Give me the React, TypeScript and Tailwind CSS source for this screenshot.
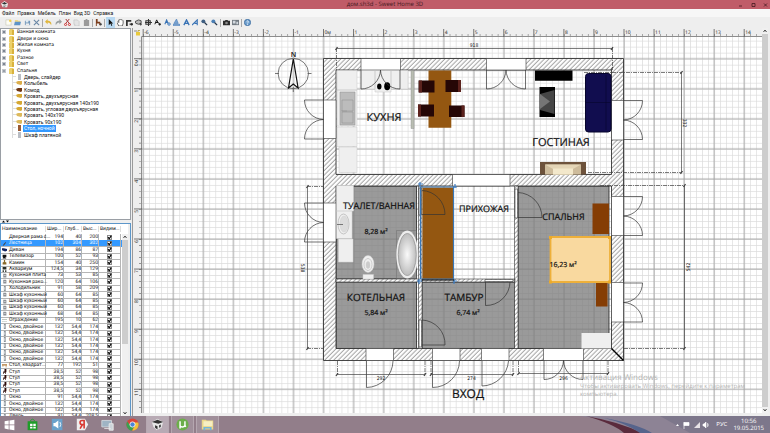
import { useState, type ReactNode } from 'react';
import { clsx } from 'clsx';

const MENUS = ['Файл', 'Правка', 'Мебель', 'План', 'Вид 3D', 'Справка'];
const FOLDERS = ['Ванная комната', 'Двери и окна', 'Жилая комната', 'Кухня', 'Разное', 'Свет'];
const BEDROOM = [
  { name: 'Дверь, слайдер', color: '#b9bdc4', slim: true },
  { name: 'Колыбель', color: '#dcae4c' },
  { name: 'Комод', color: '#6d3413' },
  { name: 'Кровать, двухъярусная', color: '#d6a834' },
  { name: 'Кровать, двухъярусная 140x190', color: '#d6a834' },
  { name: 'Кровать, угловая двухъярусная', color: '#d6a834' },
  { name: 'Кровать 140x190', color: '#dcb95c' },
  { name: 'Кровать 90x190', color: '#dcb95c' },
  { name: 'Стол, ночной', color: '#9a5a33', slim: true },
  { name: 'Шкаф платяной', color: '#b9bdc4', slim: true },
];

type Row = { name: string; w: string; d: string; h: string; icon: string };
const row = (name: string, w: string, d: string, h: string, icon: string): Row => ({ name, w, d, h, icon });

const WINDOW2 = row('Окно, двойное', '132', '54,4', '174', 'window');
const CHAIR = row('Стул', '38,5', '52', '98', 'chair');
const ROWS: Row[] = [
  row('Дверная рама с...', '194', '40', '200', 'none'),
  row('Лестница', '102', '304', '302', 'stairs'),
  row('Диван', '194', '86', '87', 'sofa'),
  row('Телевизор', '100', '52', '93', 'tv'),
  row('Камин', '154', '40', '250', 'fire'),
  row('Аквариум', '124,5', '34', '129', 'tank'),
  row('Кухонная плита', '73', '53', '85', 'box'),
  row('Кухонная рако...', '120', '64', '106', 'box'),
  row('Холодильник', '91', '58', '209', 'window'),
  row('Шкаф кухонный', '60', '64', '85', 'box'),
  row('Шкаф кухонный', '60', '64', '85', 'box'),
  row('Шкаф кухонный', '60', '64', '85', 'box'),
  row('Шкаф кухонный', '68', '64', '85', 'box'),
  row('Ограждение', '195', '10', '62', 'fence'),
  WINDOW2, WINDOW2, WINDOW2, WINDOW2, WINDOW2, WINDOW2,
  row('Стол, квадрат...', '77', '192', '51', 'table'),
  CHAIR, CHAIR, CHAIR, CHAIR,
  row('Окно', '91', '54,4', '174', 'window'),
  WINDOW2, WINDOW2,
  row('Дверь', '91', '54,4', '208,5', 'window'),
];

const ROW_ICONS: Record<string, ReactNode> = {
  none: null,
  stairs: <path d="M1 7 6 1v2L3 7z" fill="#4a3a2c" />,
  sofa: <path d="M0 2h3l5 1v3L5 7 0 5z" fill="#13235e" />,
  tv: <path d="M1 1h6v4H5l2 2H1l1-2H1z" fill="#111" />,
  fire: <path d="M3 0h2v3l2 1v3H1V4l2-1z" fill="#8a6a2c" />,
  tank: <path d="M1 0h6v4H1zM1 5h2v3H1zM5 5h2v3H5z" fill="#2b302b" />,
  box: <path d="M2 1h4l1 1v5H2zM3 3h3v1H3z" fill="#8d9095" fillRule="evenodd" />,
  fence: <path d="M0 2h8v1H0zM0 5h8v1H0z" fill="#aeb8ae" />,
  window: <path d="M3 0h3v8H3zM4 2v4h1V2z" fill="#8b9298" fillRule="evenodd" />,
  table: <path d="M0 2h8v2H7v3H6V4H2v2H1V4H0z" fill="#b07a3a" />,
  chair: <path d="M4 0h3v5H6v3H5V6H3v2H2V4h2z" fill="#2c0b08" />,
};

const FILE_TOOLS: [string, ReactNode][] = [
  ['Создать', <><path d="M1 1h4l2 2v4H1z" fill="#fdfdf4" stroke="#b6b6a0" strokeWidth=".5" /><circle cx="6" cy="2" r="1.4" fill="#f3cf4a" /></>],
  ['Открыть', <><path d="M1 1h3l1 1h2v2H1z" fill="#eed88a" /><path d="M0 7 1 3h7L7 7z" fill="#5d93c8" /></>],
  ['Сохранить', <><path d="M1 2h6v5H1z" fill="#7397ba" /><path d="M2 0h3v4H2z" fill="#dfeaf3" /><path d="M2 5h4v2H2z" fill="#eee" /></>],
  ['Параметры', <path d="m1 1 6 6M7 1 1 7" stroke="#6a87a5" strokeWidth="1.3" />],
];
const EDIT_TOOLS: [string, ReactNode][] = [
  ['Отменить', <path d="M0 3 3 0v2c3 0 5 2 4 5-1-2-2-3-4-3v2z" fill="#e0b63c" />],
  ['Вернуть', <path d="M8 3 5 0v2C2 2 0 4 1 7c1-2 2-3 4-3v2z" fill="#9aa0a0" />],
  ['Вырезать', <><path d="m2 0 4 5M6 0 2 5" stroke="#a33" strokeWidth="1.1" /><circle cx="1.8" cy="6.3" r="1.2" fill="none" stroke="#c22" /><circle cx="6.2" cy="6.3" r="1.2" fill="none" stroke="#c22" /></>],
  ['Копировать', <path d="M1 1h4l2 2v5H2V6H1z" fill="#e4e4e4" stroke="#b0b0b0" strokeWidth=".5" />],
  ['Вставить', <path d="M1 1h2V0h2v1h2v7H1z" fill="#9b9b9b" />],
];
const ADD_TOOLS: [string, ReactNode][] = [
  ['Добавить мебель', <><path d="M1 0h2v3h3v4H5V5H2v3H1z" fill="#7b3d1c" /><path d="M5 6h3M6.500 4.500v3" stroke="#333" /></>],
];
const PLAN_TOOLS: [string, ReactNode][] = [
  ['Выбрать', <path d="M2 0v7l2-2 1 3 1-.5L5 5h2z" fill="#111" />],
  ['Панорама', <path d="M2 8 0 4l1-1 1 1V1h1l1-1 1 1h1l1 1v3L6 8z" fill="#fff" stroke="#333" strokeWidth=".8" />],
  ['Создать стены', <><path d="M0 1h6v2H2v5H0z" fill="#333" /><path d="M4 5h4v2H4z" fill="#666" /><path d="M5 6h3M6.500 4.500v3" stroke="#222" /></>],
  ['Создать комнаты', <path d="M0 3 4 1l3 1v3L4 6 1 5zM5 6h3M6.500 4.500v3" fill="#bbb" stroke="#333" strokeWidth=".9" />],
  ['Создать полилинии', <path d="M1 2h5v4H1zM4 0v8M0 4h8" fill="none" stroke="#333" strokeWidth="1.200" />],
  ['Создать размеры', <path d="M1 6 3 1l2 4M2 4h3M5 6h3M6.500 4.500v3" fill="none" stroke="#111" strokeWidth="1.100" />],
  ['Добавить текст', <><path d="M1 6 3 1l2 5M2 4h3" fill="none" stroke="#3973b5" strokeWidth="1.200" /><circle cx="5.800" cy="5.800" r="1.500" fill="#9bbde0" stroke="#3973b5" strokeWidth=".7" /></>],
  ['Увеличить текст', <><path d="M1 5 4 0l2 5zM0 6h8v1.500H0z" fill="#7ba5d4" stroke="#3d75b5" strokeWidth=".6" /></>],
  ['Полужирный', <path d="M1 7 4 1l3 6M2 5h4" fill="none" stroke="#3973b5" strokeWidth="1.500" />],
  ['Курсив', <path d="M0 7 6 1v6M3 5h3" fill="none" stroke="#3973b5" strokeWidth="1.300" />],
  ['Увеличить', <><circle cx="2.700" cy="2.700" r="2.200" fill="#3e5f83" /><path d="m4 4 3 3" stroke="#26384d" strokeWidth="1.500" /></>],
  ['Уменьшить', <><circle cx="2.700" cy="2.700" r="2.200" fill="#4b7fb5" /><path d="m4 4 3 3" stroke="#26384d" strokeWidth="1.500" /></>],
];
const VIEW_TOOLS: [string, ReactNode][] = [
  ['Создать фото', <><path d="M0 2h2l1-1h2l1 1h2v5H0z" fill="#2c2c2c" /><circle cx="4" cy="4.500" r="1.500" fill="#8b8b8b" /></>],
  ['Создать видео', <><path d="M0 1h8v6H0z" fill="#737b83" /><path d="M1 2h3v3H1zM5 3h2v3H5z" fill="#d3d9df" /></>],
];
const HELP_TOOLS: [string, ReactNode][] = [
  ['Справка', <><circle cx="4" cy="4" r="3.600" fill="#6fa0cf" stroke="#2f6296" strokeWidth=".8" /><path d="M3 3q1-1.500 2 0 0 1-1 1.500M4 5.500v1" fill="none" stroke="#fff" /></>],
];

function ToolGroup({ tools, className }: { tools: [string, ReactNode][]; className: string }) {
  return (
    <div className={clsx('flex h-full shrink-0', className)}>
      {tools.map(([label, icon]) => (
        <button
          key={label}
          aria-label={label}
          className={clsx('flex flex-1 items-center justify-center', label === 'Выбрать' && 'bg-[#b8d9f2]')}
        >
          <svg viewBox="0 0 8 8" className="size-[7px] shrink-0">{icon}</svg>
        </button>
      ))}
    </div>
  );
}

function Separator() {
  return <div className="mx-px h-[8px] w-px shrink-0 bg-[#a9a9a9]" />;
}

function Toolbar() {
  return (
    <div className="flex h-[11px] shrink-0 items-center bg-[#eeeeee] pl-[4px]">
      <ToolGroup tools={FILE_TOOLS} className="w-[37px]" />
      <Separator />
      <ToolGroup tools={EDIT_TOOLS} className="w-[47px]" />
      <Separator />
      <ToolGroup tools={ADD_TOOLS} className="w-[9px]" />
      <Separator />
      <ToolGroup tools={PLAN_TOOLS} className="w-[113px]" />
      <Separator />
      <ToolGroup tools={VIEW_TOOLS} className="w-[18px]" />
      <Separator />
      <ToolGroup tools={HELP_TOOLS} className="w-[9px]" />
    </div>
  );
}

function Expander({ open }: { open?: boolean }) {
  return (
    <svg viewBox="0 0 4 4" className="mr-[3px] size-[4px] shrink-0">
      <path d="M0 0h4v4H0z" fill="#c3c7cc" />
      <path d={open ? 'M1 2h2' : 'M1 2h2M2 1v2'} stroke="#4b5867" strokeWidth=".7" />
    </svg>
  );
}

function FolderIcon() {
  return (
    <svg viewBox="0 0 6 6" className="mr-[2px] size-[6px] shrink-0">
      <path d="M1 0h3l1 1v5H0V1z" fill="#ecd06a" />
      <path d="M3 1h2v5H3z" fill="#d9b23e" />
    </svg>
  );
}

function Catalog({ selected, onSelect }: { selected: string; onSelect: (name: string) => void }) {
  return (
    <div className="h-[192px] shrink-0 overflow-hidden border border-[#9a9fa5] bg-white">
      <ul className="flex h-[109px] flex-col whitespace-nowrap">
        {FOLDERS.map(name => (
          <li key={name} className="flex flex-1 items-center pl-px">
            <Expander /><FolderIcon />{name}
          </li>
        ))}
        <li className="flex flex-1 items-center pl-px"><Expander open /><FolderIcon />Спальня</li>
        {BEDROOM.map(item => (
          <li key={item.name} className="flex flex-1 items-center pl-[11px]">
            <span className="h-full w-[4px] shrink-0 border-l border-[#dddddd]">
              <span className="block h-1/2 border-b border-[#dddddd]" />
            </span>
            <svg viewBox="0 0 6 6" className="mr-px size-[6px] shrink-0">
              <path d={item.slim ? 'M2 0h3v6H2z' : 'M0 2 2 1h4v3L5 5 1 4z'} fill={item.color} />
            </svg>
            <button
              onClick={() => onSelect(item.name)}
              className={clsx('h-full px-px', selected === item.name && 'bg-[#3399ff] text-white')}
            >
              {item.name}
            </button>
          </li>
        ))}
      </ul>
    </div>
  );
}

const COLUMNS = 'grid grid-cols-[45px_18px_18px_17px_22px]';

function FurnitureTable() {
  const [selected, setSelected] = useState(1);
  return (
    <div className="flex min-h-0 flex-1 overflow-hidden border border-b-0 border-[#5c96c9] bg-white">
      <table className="block min-w-0 flex-1 overflow-hidden whitespace-nowrap">
        <thead className="block">
          <tr className={clsx(COLUMNS, 'h-[10px] items-center')}>
            {['Наименование', 'Шир...', 'Глуб...', 'Выс...', 'Видим...'].map(title => (
              <th key={title} className="border-r border-[#dddddd] pl-px text-left font-normal">{title}</th>
            ))}
          </tr>
        </thead>
        <tbody className="flex h-[186px] flex-col">
          {ROWS.map((r, i) => (
            <tr
              key={i}
              onClick={() => setSelected(i)}
              className={clsx(COLUMNS, 'min-h-0 flex-1 items-stretch', i === selected && 'bg-[#3399ff] text-white')}
            >
              <td className="flex items-center border-r border-b border-[#b5b5b5] pl-px">
                <svg viewBox="0 0 8 8" className="mr-[2px] size-[5px] shrink-0">{ROW_ICONS[r.icon]}</svg>
                {r.name}
              </td>
              {[r.w, r.d, r.h].map((value, n) => (
                <td key={n} className="flex items-center justify-end border-r border-b border-[#b5b5b5]">{value}</td>
              ))}
              <td className="flex items-center justify-center border-r border-b border-[#b5b5b5]">
                <input
                  type="checkbox"
                  defaultChecked
                  aria-label={`Видимость: ${r.name}`}
                  className="peer size-[5px] appearance-none border border-[#8c8c8c] bg-white"
                />
                <svg viewBox="0 0 5 5" className="pointer-events-none -ml-[5px] hidden size-[5px] peer-checked:block">
                  <path d="m1 2.200 1.200 1.600L4.300.6" fill="none" stroke="#000" strokeWidth="1.100" />
                </svg>
              </td>
            </tr>
          ))}
        </tbody>
      </table>
      <div className="mt-[10px] flex w-[6px] shrink-0 flex-col items-center bg-[#f0f0f0]">
        <Arrow />
        <div className="h-[104px] w-full bg-[#cdcdcd]" />
        <div className="flex-1" />
        <Arrow down />
      </div>
      <div className="w-[2px] shrink-0 bg-[#eeeeee]" />
    </div>
  );
}

function Arrow({ down }: { down?: boolean }) {
  return (
    <svg viewBox="0 0 6 6" className="size-[6px] shrink-0">
      <path d={down ? 'm1.500 2 1.500 2 1.500-2' : 'm1.500 4 1.500-2 1.500 2'} fill="none" stroke="#444" />
    </svg>
  );
}

/* ---- plan ---- */

const STEP = 30.05;
const ZERO_X = 323.5;
const ZERO_Y = 58.7;

function Rulers() {
  const across = Array.from({ length: 21 }, (_, i) => i - 6);
  const downward = Array.from({ length: 12 }, (_, i) => i);
  const label = (n: number) => (n === 0 ? '0м' : String(n));
  return (
    <g fontSize="5" fill="#222">
      <path d="M133 28h2000v8H133zM133 28h8v2000h-8z" fill="#eeeeee" />
      <path d="M141.500 2000V36.500H2000" fill="none" stroke="#8d8d8d" />
      <path d="M142 35h2000" stroke="#777" strokeWidth="2" strokeDasharray=".6 5.410" strokeDashoffset="-1.200" />
      <path d="M140 40.700v2000" stroke="#777" strokeWidth="2" strokeDasharray=".6 5.410" />
      {across.map(n => (
        <g key={n}>
          <path d={`M${ZERO_X + n * STEP} 29v8`} stroke="#555" strokeWidth=".8" />
          <text x={ZERO_X + n * STEP + 1} y="34">{label(n)}</text>
        </g>
      ))}
      {downward.map(n => (
        <g key={n}>
          <path d={`M134 ${ZERO_Y + n * STEP}h8`} stroke="#555" strokeWidth=".8" />
          <text transform={`translate(138 ${ZERO_Y + n * STEP + 1}) rotate(-90)`} textAnchor="end">{label(n)}</text>
        </g>
      ))}
      <path d="M134 30h3v2h-3z" fill="#bbb" />
      <path d="M136 32h4v3.500h-4z" fill="#e8c93c" />
      <path d="M138 32v-1.500h2" fill="none" stroke="#a58d23" strokeWidth=".7" />
    </g>
  );
}

// Two leaves hinged at both ends of the opening; drawn opening upwards, then turned.
function Casement({ x, y, turn }: { x: number; y: number; turn: number }) {
  return <path transform={`translate(${x} ${y}) rotate(${turn})`} d="M-19.500 0v-19A19.500 19.500 0 0 1 0 0 19.500 19.500 0 0 1 19.500-19V0" />;
}

function Walls() {
  return (
    <g stroke="#333" strokeWidth=".9">
      <path
        fillRule="evenodd"
        fill="url(#hatch)"
        d="M323.500 58.500h300v302h-300zM336 70v104.500h275.500V70zM336 186v162.500h275.500V186z"
      />
      <path
        fill="url(#hatch)"
        strokeWidth=".6"
        d="M336 279h82.500v3H336zM418.500 186h3.500v162.500h-3.500zM422 279h93v3h-93zM514.500 186h3.500v162.500h-3.500z"
      />
      <g fill="#fff" strokeWidth=".6">
        <path d="M361 58.500h39.500V70H361zM486.500 58.500H526V70h-39.500z" />
        <path d="M323.500 100H336v38.500h-12.500zM323.500 203H336v39h-12.500z" />
        <path d="M611.500 100.500h12V140h-12zM611.500 196.500h12v39h-12zM611.500 282.500h12v39.500h-12z" />
        <path d="M366 348.500h27.500v12H366zM432.500 348.500H460v12h-27.500zM481.500 348.500H509v12h-27.500zM543.500 348.500h40v12h-40z" />
        <path d="M452.500 174.500H510V186h-57.500z" />
        <path d="M419 188h2.500v27H419zM419 320h2.500v27H419zM485 279.500h28v2h-28zM515 189h2.500v29H515z" />
      </g>
      <path d="m611.500 348.500 12 12" stroke="#000" strokeWidth="1.400" />
    </g>
  );
}

function DoorSwings() {
  return (
    <g fill="none" stroke="#333" strokeWidth=".7">
      <Casement x={380.5} y={70} turn={180} />
      <Casement x={506} y={70} turn={180} />
      <Casement x={323.5} y={119.500} turn={-90} />
      <Casement x={323.5} y={222.500} turn={-90} />
      <Casement x={623.5} y={120} turn={90} />
      <Casement x={623.5} y={216} turn={90} />
      <Casement x={623.5} y={302.500} turn={90} />
      <Casement x={563.5} y={360.500} turn={180} />
      <path d="M366.500 361v26.500a27 27 0 0 0 26.500-26.500M432.500 361v26.500a27 27 0 0 0 27-26.500M482 361v25a27 27 0 0 0 26.500-25" />
      <path d="M422 214.500h23a24 24 0 0 0-23-24M518 217.500h24a25 25 0 0 0-24-25" />
      <path d="M485.500 282v23.500a24 24 0 0 0 24.500-23.500M422 345h23a24 24 0 0 0-23-25" />
    </g>
  );
}

function Furniture() {
  return (
    <g>
      <g fill="#efefef" stroke="#c4c4c4" strokeWidth=".5">
        <path d="M337 70.500h20V90h-20zM337 90h20v36h-20zM337 127h20v19.500h-20zM339 147h18v25.500h-18z" />
        <path d="M361 70.500h14V89h-14zM391 70.500h17V89h-17zM375 70.500h16V92h-16z" />
        <path d="M340 92h15v33h-15z" fill="#bcbcbc" stroke="#8c8c8c" />
        <path d="M342 100h11v11h-11zM342 112h11v11h-11zM341 111h6" fill="none" stroke="#8c8c8c" />
      </g>
      <ellipse cx="379.300" cy="86.500" rx="2.200" ry="3" />
      <ellipse cx="387.200" cy="86.300" rx="3" ry="4" />
      <path d="M411 70.500h3v58h-3z" fill="#b9bdb2" stroke="#888" strokeWidth=".4" />

      <path d="M428.500 70.500h22.800v57.300h-22.800z" fill="#945711" />
      <g fill="#250706">
        <path d="M418.500 80.500h16v12h-16zM445.500 80h15.500v12h-15.500zM418 104.500h16v12h-16zM449 105.500h15.500v11.500h-15.500z" />
        <path d="M419 80.500h3v12h-3zM458 80h3v12h-3zM418 104.500h3v12h-3zM461.500 105.500h3v11.500h-3z" fill="#5b221d" />
      </g>

      <path d="M535 70.500h37.500v10.300H535zM539.500 87h15.500v30h-15.500z" />
      <path d="m540 94 14.500-4v24l-14.500-4z" fill="#454545" />
      <path d="m540 94 10 7.500-10 7.500z" fill="#757575" />
      <rect x="585.500" y="73.500" width="25.500" height="58.500" rx="3" fill="#110d4f" stroke="#07052c" />
      <path d="M586 102.500h25M606 75v55" stroke="#07052c" strokeWidth=".6" />
      <path d="M540 162h46v12.500h-46z" fill="#6d523b" />
      <path d="M545 164.500h36v10h-36z" fill="#cdbb9b" />
      <path d="m545 164.500 8 4.500v5.500h20V169l8-4.500z" fill="#e4d5b6" />
      <path d="M553 168.500h20v6h-20z" fill="#f3e8cb" />

      <g fill="#efefef" stroke="#cfcfcf" strokeWidth=".5">
        <path d="M336.500 185.500h17V211h-17zM336.500 211h15.500v27.500h-15.500zM338.500 239H353v23h-14.500z" />
        <ellipse cx="343.500" cy="224" rx="5.500" ry="10" stroke="#999" />
        <ellipse cx="344" cy="224" rx="4" ry="8" fill="#dcdcdc" />
        <path d="M337 224.500h6" stroke="#777" strokeWidth="1" />
        <path d="M363 274.500h10.500v4.500H363z" />
        <ellipse cx="368" cy="264" rx="6" ry="8.500" />
        <ellipse cx="368" cy="264.500" rx="4" ry="6" stroke="#aaa" />
        <ellipse cx="368" cy="265" rx="2" ry="3.500" fill="#ccc" />
      </g>
      <path d="M396.500 230.500h20v48h-20z" fill="none" stroke="#6e6e6e" strokeWidth=".5" />
      <ellipse cx="407.300" cy="254.500" rx="11" ry="24" fill="#ededed" />
      <ellipse cx="407.300" cy="254.500" rx="9" ry="21" fill="url(#tub)" stroke="#8f8f8f" strokeWidth=".7" />

      <path d="M422.500 187.500h30.500v91.500h-30.500z" fill="#945711" />
      <path d="M592.500 203.500H609V234h-16.500zM596 283h11.500v23.500H596z" fill="#853d04" />
      <path d="M550.500 237h59.500v45h-59.500z" fill="#f9d99f" stroke="#eeb03a" strokeWidth="1.800" />
      <path d="M549 236h3v3h-3zM608 236h3v3h-3zM549 280.500h3v3h-3zM608 280.500h3v3h-3z" fill="#eeab28" />
      <path d="M581.500 333H611v15.500h-29.500z" fill="#efefef" />
    </g>
  );
}

function Dimensions() {
  return (
    <g>
      <g fill="none" stroke="#444" strokeWidth=".7">
        <path d="M336.500 48.500H612M681.500 72.500V173M684.500 185.500v163M307.500 186v162.500M337 374.500h88M431 374.500h82M518.500 373.500H608" />
        <path strokeDasharray="4 1 1 1" d="M336.500 48v22M612.500 48v22M584 72.500h98M588 172.500h94M600 185.500h85M624 348.500h61M307 186.500h16M307 348.500h16M337.500 361v13M425 361v13M431 361v13M513 361v13M518.500 361v13M608 361v13" />
        <path
          strokeWidth="1.300"
          d="m335.500 50 2-3M611 50l2-3M680.500 74l2-3M680.500 174l2-3M683.500 187l2-3M683.500 350l2-3M306.500 188l2-3M306.500 350l2-3M336 376l2-3M424 376l2-3M430 376l2-3M512 376l2-3M517.500 375l2-3M607 375l2-3M611 70l2-3"
        />
      </g>
      <g fontSize="5" fill="#222" textAnchor="middle" className="font-['DejaVu_Sans_Condensed','DejaVu_Sans',sans-serif]">
        <text x="474" y="47">918</text>
        <text x="381" y="380">292</text>
        <text x="471.500" y="380">274</text>
        <text x="563.500" y="379.500">296</text>
        <text transform="translate(683 123) rotate(90)">332</text>
        <text transform="translate(690 267) rotate(-90)">542</text>
        <text transform="translate(301 268) rotate(90)">538</text>
      </g>
    </g>
  );
}

function RoomNames() {
  return (
    <g fill="#111" stroke="#111" strokeWidth=".2" textAnchor="middle">
      <text x="468" y="398" fontSize="12">ВХОД</text>
      <g fontSize="11">
        <text x="384" y="121">КУХНЯ</text>
        <text x="561" y="146">ГОСТИНАЯ</text>
      </g>
      <g fontSize="10">
        <text x="376" y="301">КОТЕЛЬНАЯ</text>
        <text x="464" y="301">ТАМБУР</text>
      </g>
      <g fontSize="9">
        <text x="379" y="209">ТУАЛЕТ/ВАННАЯ</text>
        <text x="484" y="212">ПРИХОЖАЯ</text>
        <text x="563.500" y="220">СПАЛЬНЯ</text>
      </g>
      <g fontSize="7">
        <text x="376" y="234">8,28 м²</text>
        <text x="376" y="315">5,84 м²</text>
        <text x="468" y="315">6,74 м²</text>
        <text x="563" y="267">16,23 м²</text>
      </g>
    </g>
  );
}

function Plan() {
  return (
    <svg className="block h-full w-full" role="img" aria-label="План дома">
      <defs>
        <pattern id="minor" x={ZERO_X} y={ZERO_Y} width="6.010" height="6.010" patternUnits="userSpaceOnUse">
          <path d="M0 .3h6.010M.3 0v6.010" stroke="#dadada" strokeWidth=".8" />
        </pattern>
        <pattern id="major" x={ZERO_X - 1} y={ZERO_Y - 1} width={STEP} height={STEP} patternUnits="userSpaceOnUse">
          <path d="M0 1h31M1 0v31" stroke="#a2a2a2" strokeWidth=".9" />
        </pattern>
        <pattern id="hatch" width="3.200" height="3.200" patternUnits="userSpaceOnUse" patternTransform="rotate(45)">
          <path d="M0 0h4v4H0z" fill="#fff" />
          <path d="M1 0v4" stroke="#666" strokeWidth=".6" />
        </pattern>
        <radialGradient id="tub">
          <stop offset="0" stopColor="#fafafa" />
          <stop offset="1" stopColor="#bdbdbd" />
        </radialGradient>
      </defs>
      <g transform="translate(-133 -28)" className="font-['Open_Sans','Noto_Sans',sans-serif]">
        <path d="M133 28h2000v2000H133z" fill="#fff" />
        <path d="M133 28h2000v2000H133z" fill="url(#minor)" />
        <path d="M133 28h2000v2000H133z" fill="url(#major)" />
        <path
          d="M336 186h80.500v93H336zM336 282h80.500v66.500H336zM422 282h92.500v66.500H422zM518 186h91v162.500h-91z"
          fill="#7e7e7e"
          fillOpacity=".78"
          stroke="#222"
          strokeWidth=".8"
        />
        <Walls />
        <Furniture />
        <DoorSwings />
        <path d="M420.500 187h33v92h-33z" fill="none" stroke="#3a78b8" strokeWidth="1.200" />
        <path d="M418 184h5M420 182v5M453 187h4M455 184v4M417 281h5M419 279v5M453 281h4M454 279v5" stroke="#3f7fc4" strokeWidth="1.200" />
        <path d="M422 280h32" stroke="#111" strokeWidth="1.200" />
        <Dimensions />
        <g fill="none" stroke="#555" strokeWidth=".8">
          <circle cx="293.300" cy="73.500" r="15.200" />
          <path d="M275 73.500h4M307.500 73.500h4M293.300 87v5" />
          <path d="m293.300 59-4.800 29 4.800-4 4.800 4z" stroke="#111" strokeWidth="1.200" />
        </g>
        <text x="293.500" y="57" fontSize="7" fontWeight="600" textAnchor="middle" fill="#111">N</text>
        <RoomNames />
        <g fill="#b4b4b4">
          <text x="580" y="379.500" fontSize="8">Активация Windows</text>
          <g fontSize="6">
            <text x="580" y="388">Чтобы активировать Windows, перейдите к параметрам</text>
            <text x="580" y="396">компьютера.</text>
          </g>
        </g>
        <Rulers />
      </g>
    </svg>
  );
}

const APPS: { name: string; running?: boolean; art: ReactNode }[] = [
  { name: 'Магазин', art: <><path d="M2 4h12v11H2z" fill="#1e9d28" /><path d="M5 4q3-5 6 0" fill="none" stroke="#1e9d28" /><path d="M5 7h3v3H5zM9 7h3v3H9zM5 11h3v2H5zM9 11h3v2H9z" fill="#fff" /></> },
  { name: 'Звук', art: <><path d="M1 1h13v14H1z" fill="#6aa2cc" /><path d="M3 6h2l4-3v10L5 10H3z" fill="#fff" /><path d="M11 5q2 3 0 6" fill="none" stroke="#fff" /></> },
  { name: 'Яндекс', art: <><path d="M1 1h10l4 7-4 7H1z" fill="#eeeeee" /><path d="M10 13V3H7.500Q5 3 5 5.500T7.500 8H10M8 8l-3 5" fill="none" stroke="#d93a34" strokeWidth="2" /></> },
  { name: 'Компьютер', art: <><path d="M1 3h12v8H1z" fill="#9fb4c4" stroke="#d6dde2" /><path d="M4 13h8M10 7h5v8h-5z" fill="#ccd4da" stroke="#eeeeee" /></> },
  { name: 'Chrome', art: <><circle cx="8" cy="8" r="7.500" fill="#d9453a" /><path d="M1.500 4.200A7.500 7.500 0 0 0 7.500 15.500L10.500 9.500 5 9z" fill="#3aa152" /><path d="M15 5.500a7.500 7.500 0 0 1-7.500 10L11 9.500 9 5.500z" fill="#f2c33a" /><circle cx="8" cy="8" r="3.200" fill="#4b86d8" stroke="#fff" /></> },
  { name: 'Sweet Home 3D', running: true, art: <><path d="m1 5 7-4 7 4-2 7-6 3-4-4z" fill="#e6e6e6" /><path d="m1 5 7-3 7 3-6 2zM5 9l3 1v4l-3-2zM10 9l2-1v3l-2 1z" fill="#333" /></> },
  { name: 'uTorrent', running: true, art: <><circle cx="8" cy="8" r="7.500" fill="#6cae4a" /><path d="M5 4v5q0 2 3 2 2 0 3-2V4M5 8v5M11 9l1 2" fill="none" stroke="#fff" strokeWidth="1.800" /></> },
  { name: 'Проводник', running: true, art: <><path d="M1 2h5l1 1h8v11H1z" fill="#ecd98a" /><path d="M3 4h11v6H3z" fill="#f7efc3" /><path d="M3 15v-4h10v4h-2v-2H5v2z" fill="#74b6dc" /></> },
];

function Taskbar() {
  return (
    <footer className="relative flex h-[17px] shrink-0 items-center overflow-hidden bg-[#927e8a] text-white">
      <svg viewBox="0 0 190 17" preserveAspectRatio="none" className="absolute top-0 right-0 h-full w-[190px]">
        <path d="M0 0h190v17H60Q40 6 0 0z" fill="#8d8395" />
        <path d="M80 0h110v17H110z" fill="#7d778b" />
        <path d="M6 0q34 6 56 17H44Q34 8 6 0z" fill="#5a2b3c" />
        <path d="M24 2q34 6 48 15H60Q46 7 24 2z" fill="#56648c" />
      </svg>
      <nav className="relative flex h-full gap-[2px]">
        <button aria-label="Пуск" className="flex h-full w-[19px] items-center justify-center">
          <svg viewBox="0 0 16 16" className="size-[13px]">
            <path d="m2 4 5-1v5H2zM8 3l6-1v6H8zM2 9h5v5l-5-1zM8 9h6v6l-6-1z" fill="#fff" />
          </svg>
        </button>
        {APPS.map(app => (
          <button
            key={app.name}
            aria-label={app.name}
            className={clsx(
              'flex h-full w-[23px] items-center justify-center',
              app.running && 'border-x border-[#b5a7b0]',
              app.running && (app.name === 'Sweet Home 3D' ? 'bg-[#b8aab4]' : 'bg-[#a08f9a]'),
            )}
          >
            <svg viewBox="0 0 16 16" className="size-[13px]">{app.art}</svg>
          </button>
        ))}
      </nav>
      <div className="relative ml-auto flex items-center gap-[4px] pr-[6px] font-['Open_Sans',sans-serif] text-[6px] leading-[7px]">
        <svg viewBox="0 0 36 8" className="h-[8px] w-[36px]">
          <path d="m2 5 1.500-2L5 5z" fill="#fff" />
          <path d="M10 1v7M10 1.500h5v3h-5z" fill="#fff" stroke="#fff" strokeWidth=".7" />
          <path d="M20 7l6-6v6z" fill="#e7e2e6" />
          <path d="M29 3h1l2-2v6l-2-2h-1zM33.500 2q1.500 2 0 4" fill="#fff" stroke="#fff" strokeWidth=".6" />
        </svg>
        <button className="px-[2px]">РУС</button>
        <time className="text-center">10:56<br />19.05.2015</time>
      </div>
    </footer>
  );
}

export default function App() {
  const [item, setItem] = useState('Стол, ночной');
  return (
    <div className="flex h-screen flex-col overflow-hidden bg-[#eeeeee] font-['Roboto','Liberation_Sans',sans-serif] text-[5px] leading-[6px] text-[#111111] [text-rendering:geometricPrecision]">
      <header className="flex h-[9px] shrink-0 items-center bg-[#c05c68]">
        <div className="w-[34px] shrink-0 pl-px">
          <svg viewBox="0 0 8 8" className="size-[7px]">
            <path d="m0 3 4-3 4 3-1 4H2z" fill="#ececec" />
            <path d="m1 3 3-2 3 2-3 1zM3 5h1v2H3zM5 5h1v1H5z" fill="#333" />
          </svg>
        </div>
        <h1 className="flex-1 text-center font-['Open_Sans',sans-serif] text-[6px] leading-[9px] text-[#45191f]">дом.sh3d - Sweet Home 3D</h1>
        <svg viewBox="0 0 34 8" className="h-[8px] w-[34px]" fill="none" stroke="#45191f" strokeWidth=".8">
          <path d="M3 5h3M16 2.500h3v3h-3zM28 2.500l3 3M31 2.500l-3 3" />
        </svg>
      </header>

      <nav className="flex h-[8px] shrink-0 items-center gap-[3px] bg-[#f7f7f7] pl-[2px]">
        {MENUS.map(menu => <button key={menu}>{menu}</button>)}
      </nav>

      <Toolbar />

      <main className="flex min-h-0 flex-1">
        <aside className="flex w-[131px] shrink-0 flex-col">
          <Catalog selected={item} onSelect={setItem} />
          <div className="flex h-[3px] shrink-0 items-center pl-[2px]">
            <svg viewBox="0 0 8 3" className="h-[3px] w-[8px]"><path d="m0 2.500 1.500-2 1.500 2zM4 .5h3l-1.500 2z" /></svg>
          </div>
          <FurnitureTable />
        </aside>
        <div className="w-[2px] shrink-0 border-r border-[#9a9a9a]" />
        <section className="flex min-w-0 flex-1 pr-[2px] pb-[3px]">
          <div className="min-w-0 flex-1 overflow-hidden"><Plan /></div>
          <div className="flex w-[6px] shrink-0 flex-col bg-[#f0f0f0]">
            <Arrow />
            <div className="flex-1 bg-[#cdcdcd]" />
            <Arrow down />
          </div>
        </section>
      </main>

      <Taskbar />
    </div>
  );
}
